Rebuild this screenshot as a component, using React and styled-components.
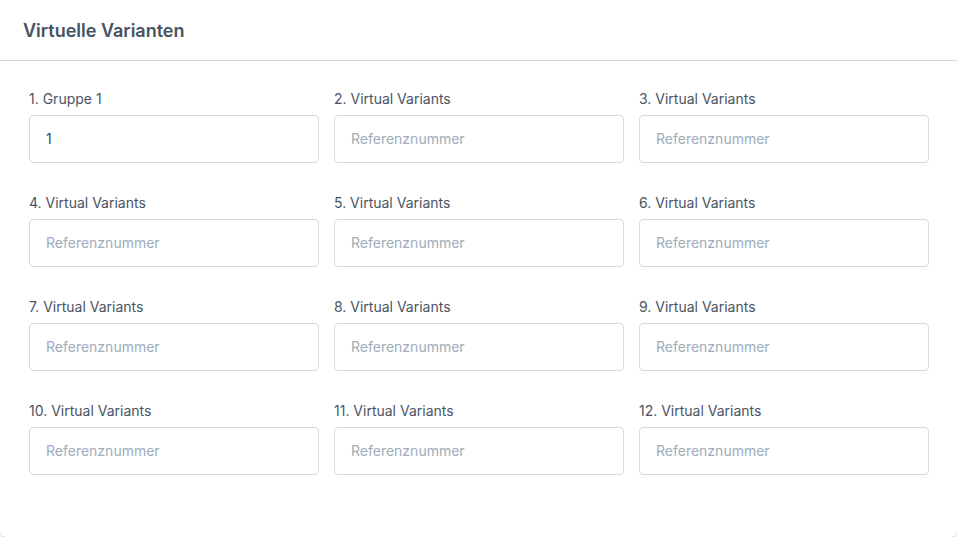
import React from 'react';
import styled, { createGlobalStyle } from 'styled-components';

const GlobalStyle = createGlobalStyle`
  html, body { margin: 0; padding: 0; background: #ffffff; }
  body { font-family: Inter, "Noto Sans", "Liberation Sans", sans-serif; }
  * { box-sizing: border-box; }
`;

const Card = styled.section`
  width: 957px;
  height: 537px;
  background: #ffffff;
  border-radius: 0 0 6px 6px;
  box-shadow: 0 1px 2px rgba(0, 0, 0, 0.22);
  display: flex;
  flex-direction: column;
`;

const Header = styled.header`
  height: 61px;
  padding: 0 23px;
  display: flex;
  align-items: center;
  border-bottom: 1px solid #cfd8e0;
`;

const Title = styled.h2`
  margin: 0;
  font-size: 18px;
  font-weight: 600;
  color: #455263;
`;

const Body = styled.div`
  padding: 28px 28px 0 29px;
  display: grid;
  grid-template-columns: repeat(3, 290px);
  column-gap: 15px;
  row-gap: 30px;
`;

const Field = styled.label`
  display: flex;
  flex-direction: column;
  gap: 6px;
`;

const Label = styled.span`
  font-size: 14px;
  line-height: 20px;
  color: #4a5464;
`;

const Input = styled.input`
  height: 48px;
  width: 100%;
  padding: 0 16px 2px;
  border: 1px solid #d2dbe3;
  border-radius: 4px;
  font-family: inherit;
  font-size: 14px;
  color: #3f4a5a;
  background: #ffffff;
  outline: none;

  &::placeholder { color: #a0abbb; }
`;

const fields = [
  { label: '1. Gruppe 1', value: '1' },
  ...Array.from({ length: 11 }, (_, i) => ({ label: `${i + 2}. Virtual Variants`, value: '' })),
];

export default function App() {
  return (
    <>
      <GlobalStyle />
      <Card>
        <Header>
          <Title>Virtuelle Varianten</Title>
        </Header>
        <Body>
          {fields.map((f, i) => (
            <Field key={i}>
              <Label>{f.label}</Label>
              <Input defaultValue={f.value} placeholder="Referenznummer" />
            </Field>
          ))}
        </Body>
      </Card>
    </>
  );
}
